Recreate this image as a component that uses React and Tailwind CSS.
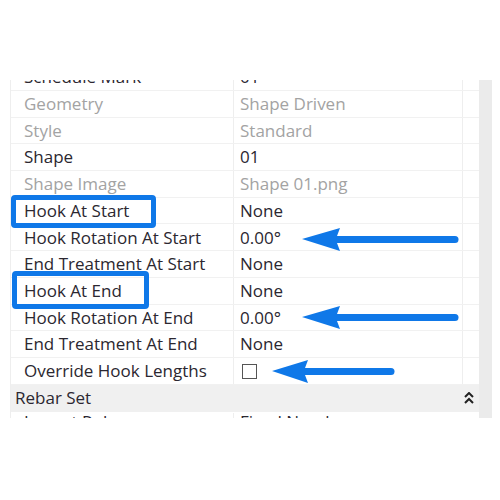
import React from "react";

const rows = [
  { label: "Schedule Mark", value: "01" },
  { label: "Geometry", value: "Shape Driven", muted: true },
  { label: "Style", value: "Standard", muted: true },
  { label: "Shape", value: "01" },
  { label: "Shape Image", value: "Shape 01.png", muted: true },
  { label: "Hook At Start", value: "None" },
  { label: "Hook Rotation At Start", value: "0.00°" },
  { label: "End Treatment At Start", value: "None" },
  { label: "Hook At End", value: "None" },
  { label: "Hook Rotation At End", value: "0.00°" },
  { label: "End Treatment At End", value: "None" },
  { label: "Override Hook Lengths", check: true },
];

const Row = ({ row }) => (
  <div className="flex h-[26.7px] border-b border-[#f1f1f1] items-center">
    <div
      className={
        "w-[223px] shrink-0 pl-[13px] h-full flex items-center border-r border-[#eeeeee] " +
        (row.muted ? "text-[#a3a3a3]" : "text-[#2b2730]")
      }
    >
      {row.label}
    </div>
    <div
      className={
        "w-[229px] shrink-0 pl-[6px] h-full flex items-center border-r border-[#eeeeee] " +
        (row.muted ? "text-[#a3a3a3]" : "text-[#2b2730]")
      }
    >
      {row.check ? (
        <span className="w-[15px] h-[15px] border border-[#555] bg-white mt-[2px] ml-[2px]" />
      ) : (
        row.value
      )}
    </div>
  </div>
);

const Arrow = ({ x1, x2, y, head = 38 }) => (
  <svg className="absolute left-0 top-0" width="500" height="500">
    <path
      d={`M ${x1} ${y} L ${x1 + head} ${y - 11} L ${x1 + head - 3} ${y - 3} L ${x2} ${y - 3} L ${x2} ${y + 4} L ${x1 + head - 3} ${y + 4} L ${x1 + head} ${y + 12} Z`}
      fill="#0f78e8"
      strokeLinejoin="round"
    />
    <circle cx={x2} cy={y + 0.5} r="3.5" fill="#0f78e8" />
  </svg>
);

export default function App() {
  return (
    <div
      className="relative w-[500px] h-[500px] bg-white text-[17px] overflow-hidden"
      style={{ fontFamily: '"Open Sans", "Noto Sans", sans-serif' }}
    >
      <div className="pt-[80px] pl-[10px]">
        <div className="flex w-[482px] h-[338px] border-l border-[#eeeeee]">
          <div className="flex-1 overflow-hidden">
            <div className="-mt-[15.7px]">
              {rows.map((r) => (
                <Row key={r.label} row={r} />
              ))}
              {/* カテゴリ行 */}
              <div className="flex h-[27px] items-center justify-between bg-[#f0f0f0] pl-[4px] pr-[4px] text-[#2b2730]">
                <span>Rebar Set</span>
                <svg width="10" height="12" viewBox="0 0 10 12" className="mr-[1px]">
                  <path d="M1 5 L5 1 L9 5 M1 11 L5 7 L9 11" fill="none" stroke="#222" strokeWidth="2" />
                </svg>
              </div>
              <div className="flex h-[26.7px] items-start pt-[1px] leading-none text-[#2b2730]">
                <div className="w-[223px] pl-[13px] border-r border-[#eeeeee] h-full">Layout Rule</div>
                <div className="pl-[6px]">Fixed Number</div>
              </div>
            </div>
          </div>
          <div className="w-[13px] bg-[#ebebeb]" />
        </div>
      </div>

      {/* 青い枠 */}
      <div className="absolute left-[11px] top-[195px] w-[145px] h-[33px] border-[5px] border-[#0f78e8] rounded-[4px]" />
      <div className="absolute left-[12px] top-[271px] w-[137px] h-[38px] border-[5px] border-[#0f78e8] rounded-[4px]" />

      {/* 矢印 */}
      <Arrow x1={302} x2={455} y={239} />
      <Arrow x1={302} x2={455} y={317} />
      <Arrow x1={272} x2={391} y={371} head={36} />
    </div>
  );
}
